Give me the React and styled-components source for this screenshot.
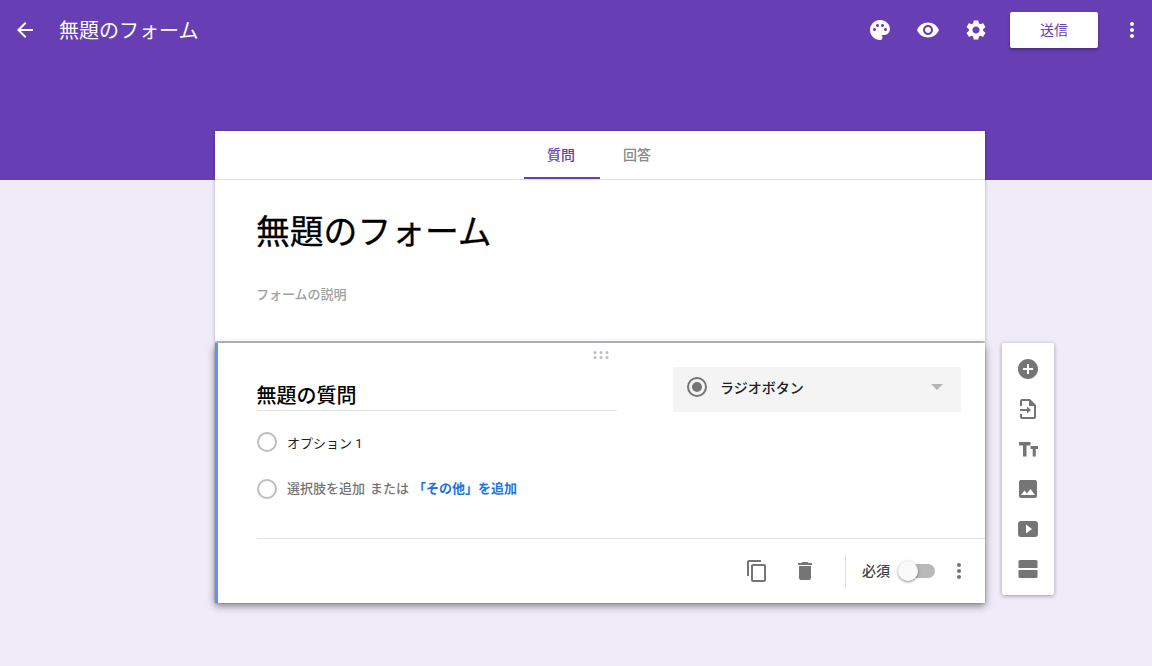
import React from 'react'
import styled, { createGlobalStyle } from 'styled-components'
import {
  MdArrowBack, MdPalette, MdVisibility, MdSettings, MdMoreVert,
  MdContentCopy, MdDelete, MdAddCircle, MdImage,
} from 'react-icons/md'

const GlobalStyle = createGlobalStyle`
  html, body {
    margin: 0;
    padding: 0;
    height: 100%;
    overflow: hidden;
    font-family: Roboto, "Noto Sans CJK JP", sans-serif;
  }
`

const Page = styled.div`
  width: 1152px;
  height: 666px;
  overflow: hidden;
  background: linear-gradient(#673eb3 180px, #f0ebf8 180px);
`

const TopBar = styled.header`
  height: 131px;
  box-sizing: border-box;
  padding: 12px 8px 0 13px;
  display: flex;
  align-items: flex-start;
  color: #fff;
`

const BackButton = styled.div`
  width: 24px;
  height: 36px;
  display: flex;
  align-items: center;
  font-size: 24px;
  margin-right: 22px;
`

const FormName = styled.div`
  flex: 1;
  font-size: 20px;
  line-height: 38px;
  font-weight: 400;
  height: 36px;
`

const TopIcon = styled.div`
  width: 24px;
  height: 36px;
  margin-left: 24px;
  display: flex;
  align-items: center;
  justify-content: center;
  font-size: 24px;
`

const SendButton = styled.button`
  width: 88px;
  height: 36px;
  margin: 0 22px 0 22px;
  padding: 0 0 2px;
  border: 0;
  border-radius: 2px;
  background: #fff;
  color: #673eb3;
  font-family: inherit;
  font-size: 14px;
  font-weight: 400;
  box-shadow: 0 2px 3px rgba(0, 0, 0, 0.3);
`

const MoreTop = styled.div`
  width: 24px;
  height: 36px;
  display: flex;
  align-items: center;
  justify-content: center;
  font-size: 24px;
`

const Content = styled.main`
  display: flex;
  align-items: flex-start;
  margin-left: 215px;
`

const FormColumn = styled.div`
  width: 770px;
  display: flex;
  flex-direction: column;
  gap: 2px;
`

const HeaderCard = styled.section`
  background: #fff;
  height: 210px;
  box-shadow: 0 1px 3px rgba(0, 0, 0, 0.3);
`

const Tabs = styled.nav`
  height: 48px;
  box-sizing: content-box;
  border-bottom: 1px solid #e0e0e0;
  display: flex;
  justify-content: center;
`

const Tab = styled.div`
  width: 76px;
  height: 48px;
  box-sizing: border-box;
  padding-right: 2px;
  text-align: center;
  font-size: 14px;
  font-weight: 500;
  line-height: 48px;
  color: ${p => (p.$active ? '#673eb3' : '#8a8a8a')};
  border-bottom: 2px solid ${p => (p.$active ? '#673eb3' : 'transparent')};
`

const TitleBlock = styled.div`
  padding: 29px 42px 0 41px;
`

const FormTitle = styled.h1`
  margin: 0;
  font-size: 33.8px;
  line-height: 48px;
  font-weight: 400;
  color: #000;
  -webkit-text-stroke: 0.3px #000;
`

const FormDescription = styled.p`
  margin: 28px 0 0;
  font-size: 13px;
  line-height: 20px;
  font-weight: 500;
  color: #a0a0a0;
`

const QuestionCard = styled.section`
  position: relative;
  height: 260px;
  box-sizing: border-box;
  background: #fff;
  border-left: 3px solid #5a95f5;
  padding: 24px 0 0 39px;
  display: flex;
  flex-direction: column;
  box-shadow: 0 3px 8px rgba(0, 0, 0, 0.45), 0 0 2px rgba(0, 0, 0, 0.3);
`

const DragHandle = styled.svg`
  position: absolute;
  top: 8px;
  left: 375px;
  width: 16px;
  height: 8px;
  fill: #bdbdbd;
`

const QuestionRow = styled.div`
  display: flex;
  justify-content: space-between;
  padding-right: 24px;
`

const QuestionTitle = styled.div`
  width: 360px;
  height: 44px;
  box-sizing: border-box;
  padding-top: 15px;
  text-indent: -0.5px;
  font-size: 20px;
  line-height: 28px;
  font-weight: 500;
  color: #000;
  border-bottom: 1px solid #e0e0e0;
`

const TypeSelect = styled.div`
  width: 288px;
  height: 45px;
  box-sizing: border-box;
  background: #f4f4f4;
  border-radius: 2px;
  padding: 0 18px 5px 14px;
  display: flex;
  align-items: center;
  font-size: 14px;
  font-weight: 500;
  color: #212121;
`

const TypeRadio = styled.span`
  width: 20px;
  height: 20px;
  box-sizing: border-box;
  border: 2px solid #757575;
  border-radius: 50%;
  display: flex;
  align-items: center;
  justify-content: center;
  margin-right: 13px;

  &::after {
    content: '';
    width: 10px;
    height: 10px;
    border-radius: 50%;
    background: #757575;
  }
`

const TypeLabel = styled.span`
  flex: 1;
`

const Caret = styled.span`
  width: 0;
  height: 0;
  border-left: 6px solid transparent;
  border-right: 6px solid transparent;
  border-top: 6px solid #b5b5b5;
`

const OptionRow = styled.div`
  display: flex;
  align-items: center;
  height: 20px;
  margin-top: ${p => p.$gap}px;
  font-size: 13px;
  line-height: 18px;
  font-weight: 400;
  color: #212121;
`

const OptionCircle = styled.span`
  width: 20px;
  height: 20px;
  box-sizing: border-box;
  border: 2px solid #bdbdbd;
  border-radius: 50%;
  margin-right: 10px;
`

const OptionLabel = styled.span`
  padding-top: 3px;
`

const AddOption = styled.span`
  color: #757575;
  font-weight: 500;
  margin-right: ${p => p.$space}px;
`

const AddOther = styled.span`
  color: #1a73e8;
  font-weight: 700;
`

const Footer = styled.div`
  margin-top: auto;
  height: 65px;
  box-sizing: border-box;
  border-top: 1px solid #e0e0e0;
  display: flex;
  align-items: center;
  justify-content: flex-end;
  padding-right: 14px;
  color: #757575;
`

const FooterIcon = styled.div`
  width: 24px;
  height: 24px;
  margin-right: ${p => p.$space}px;
  font-size: 24px;
  display: flex;
  align-items: center;
  justify-content: center;
`

const FooterDivider = styled.div`
  width: 1px;
  height: 32px;
  background: #e0e0e0;
  margin-right: 16px;
`

const RequiredLabel = styled.span`
  font-size: 14px;
  line-height: 18px;
  padding-bottom: 1px;
  font-weight: 500;
  color: #424242;
  margin-right: 9px;
`

const Switch = styled.div`
  position: relative;
  width: 36px;
  height: 14px;
  border-radius: 7px;
  background: #b9b9b9;
  margin-right: 12px;

  &::after {
    content: '';
    position: absolute;
    left: -1px;
    top: -3px;
    width: 20px;
    height: 20px;
    border-radius: 50%;
    background: #fafafa;
    box-shadow: 0 1px 3px rgba(0, 0, 0, 0.45);
  }
`

const ToolBox = styled.aside`
  width: 52px;
  height: 252px;
  margin: 212px 0 0 17px;
  box-sizing: border-box;
  padding: 6px 0;
  background: #fff;
  border-radius: 2px;
  box-shadow: 0 1px 4px rgba(0, 0, 0, 0.35);
  display: flex;
  flex-direction: column;
  align-items: center;
  color: #757575;
`

const Tool = styled.div`
  width: 24px;
  height: 40px;
  font-size: 24px;
  display: flex;
  align-items: center;
  justify-content: center;
`

const ToolSvg = styled.svg`
  width: 24px;
  height: 24px;
  fill: currentColor;
`

const dragDots = [1, 7, 13].flatMap(x => [1.5, 6.5].map(y => [x + 1, y]))

export default function App() {
  return (
    <Page>
      <GlobalStyle />
      <TopBar>
        <BackButton><MdArrowBack /></BackButton>
        <FormName>無題のフォーム</FormName>
        <TopIcon><MdPalette /></TopIcon>
        <TopIcon><MdVisibility /></TopIcon>
        <TopIcon><MdSettings /></TopIcon>
        <SendButton>送信</SendButton>
        <MoreTop><MdMoreVert /></MoreTop>
      </TopBar>
      <Content>
        <FormColumn>
          <HeaderCard>
            <Tabs>
              <Tab $active>質問</Tab>
              <Tab>回答</Tab>
            </Tabs>
            <TitleBlock>
              <FormTitle>無題のフォーム</FormTitle>
              <FormDescription>フォームの説明</FormDescription>
            </TitleBlock>
          </HeaderCard>
          <QuestionCard>
            <DragHandle viewBox="0 0 16 8">
              {dragDots.map(([x, y]) => <circle key={`${x}-${y}`} cx={x} cy={y} r="1.5" />)}
            </DragHandle>
            <QuestionRow>
              <QuestionTitle>無題の質問</QuestionTitle>
              <TypeSelect>
                <TypeRadio />
                <TypeLabel>ラジオボタン</TypeLabel>
                <Caret />
              </TypeSelect>
            </QuestionRow>
            <OptionRow $gap={20}>
              <OptionCircle />
              <OptionLabel>オプション 1</OptionLabel>
            </OptionRow>
            <OptionRow $gap={27}>
              <OptionCircle />
              <AddOption $space={5}>選択肢を追加</AddOption>
              <AddOption $space={4}>または</AddOption>
              <AddOther>「その他」を追加</AddOther>
            </OptionRow>
            <Footer>
              <FooterIcon $space={24}><MdContentCopy /></FooterIcon>
              <FooterIcon $space={28}><MdDelete /></FooterIcon>
              <FooterDivider />
              <RequiredLabel>必須</RequiredLabel>
              <Switch />
              <FooterIcon $space={0}><MdMoreVert /></FooterIcon>
            </Footer>
          </QuestionCard>
        </FormColumn>
        <ToolBox>
          <Tool><MdAddCircle /></Tool>
          <Tool>
            <ToolSvg viewBox="0 0 24 24">
              <path d="M6 2h8l6 6v12a2 2 0 0 1-2 2H6a2 2 0 0 1-2-2v-3h2v3h12V9h-5V4H6v5H4V4a2 2 0 0 1 2-2z" />
              <path d="M4 12h7V9.5l4 3.5-4 3.5V14H4z" />
            </ToolSvg>
          </Tool>
          <Tool>
            <ToolSvg viewBox="0 0 24 24">
              <path d="M3 5h11.500v3.500h-4v11H7v-11H3z" />
              <path d="M14.500 9H22v3h-2.200v7.500h-3.100V12h-2.200z" />
            </ToolSvg>
          </Tool>
          <Tool><MdImage /></Tool>
          <Tool>
            <ToolSvg viewBox="0 0 24 24">
              <path d="M5 4h14a3 3 0 0 1 3 3v10a3 3 0 0 1-3 3H5a3 3 0 0 1-3-3V7a3 3 0 0 1 3-3zm5 3.500v9l6-4.500z" fillRule="evenodd" />
            </ToolSvg>
          </Tool>
          <Tool>
            <ToolSvg viewBox="0 0 24 24">
              <path d="M4 3h16a1.5 1.5 0 0 1 1.5 1.500V11h-19V4.500A1.500 1.500 0 0 1 4 3z" />
              <path d="M2.500 13h19v6.500A1.500 1.500 0 0 1 20 21H4a1.500 1.500 0 0 1-1.500-1.500z" />
            </ToolSvg>
          </Tool>
        </ToolBox>
      </Content>
    </Page>
  )
}
